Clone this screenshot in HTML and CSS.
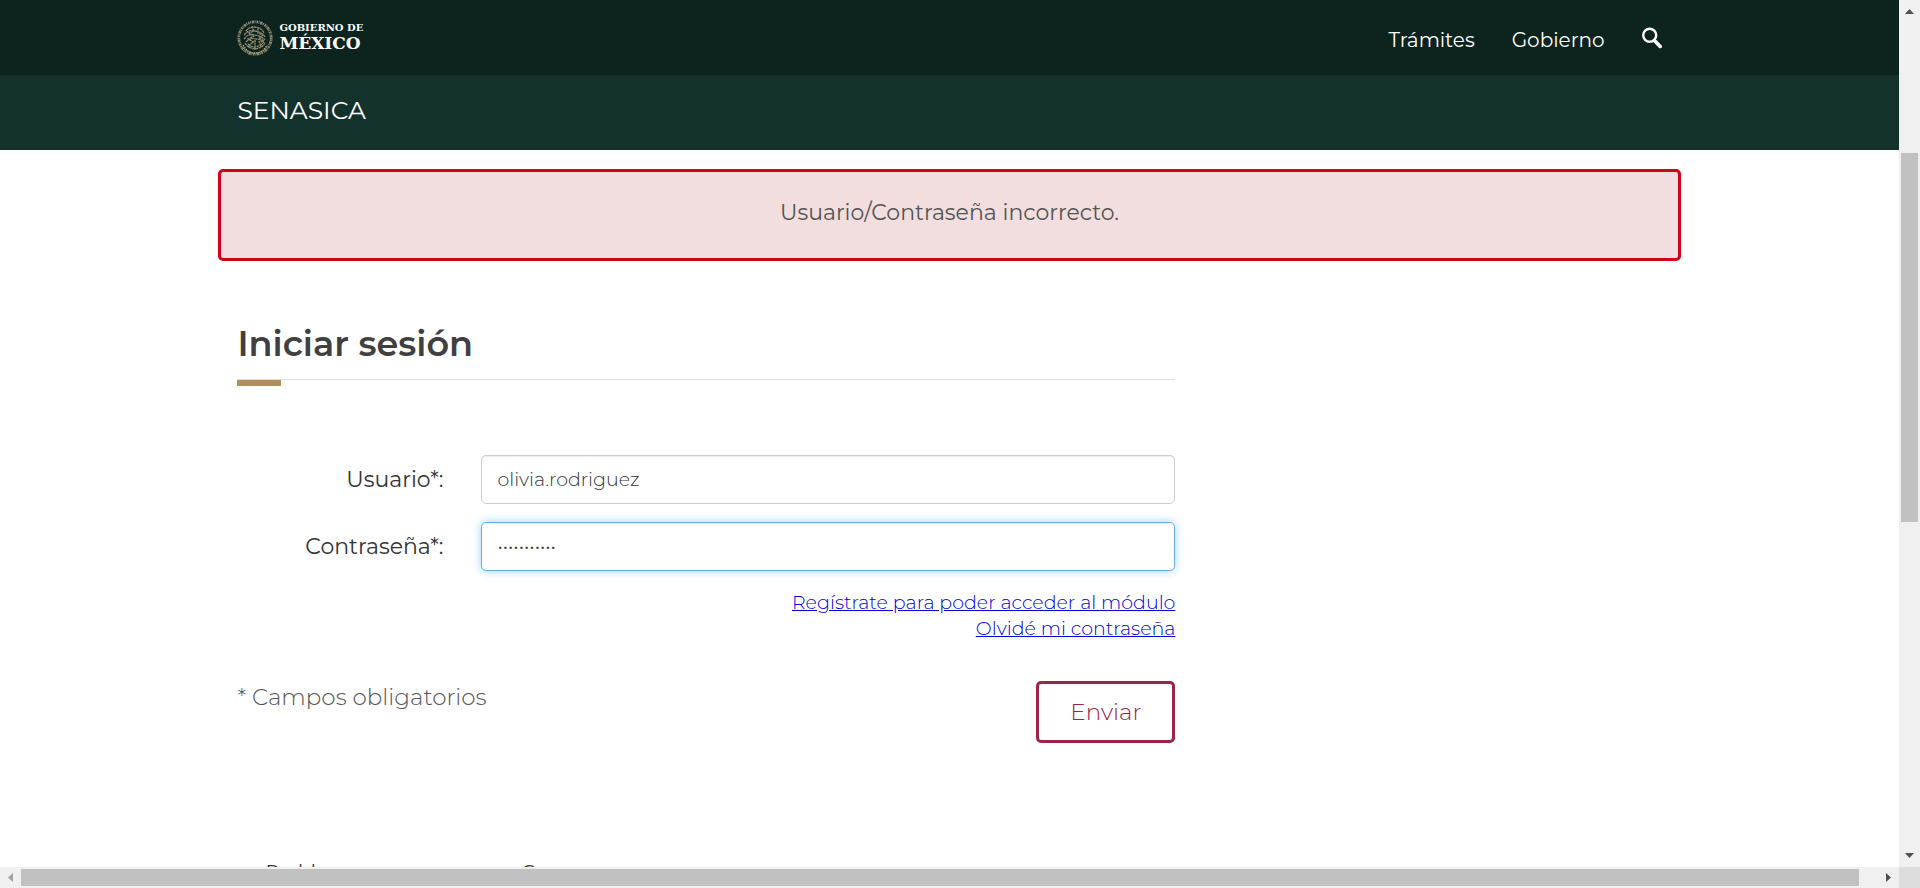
FILE: index.html
```html
<!DOCTYPE html>
<html lang="es">
<head>
<meta charset="utf-8">
<title>SENASICA</title>
<link rel="stylesheet" href="styles.css">
</head>
<body>
<div class="window">
  <div class="page">
    <header class="topbar">
      <div class="container topbar-row">
        <a class="brand" href="#">
          <svg class="emblem" viewBox="0 0 36 36" aria-hidden="true">
            <g fill="none" stroke="#8f886f">
              <circle cx="18" cy="18" r="16.2" stroke-width="2.8" stroke-dasharray="1.6 .6 .8 .7 2.4 .6 1 .9"/>
              <path d="M6 25q4 8 12 8t12-8" stroke="#b0a684" stroke-width="1.4" stroke-dasharray="1.5 .8"/>
              <g stroke-width="1.3" stroke-dasharray="2.6 .5">
                <path d="M9 11q3-4 8-4 7 0 10 6M7 15q5-6 11-4 7 1 10 6M7 19q5-6 10-4 6 0 11 5M9 22q5-5 10-3 5 0 8 4"/>
                <path d="M15 6l2 5-5 2 5 3-6 3 6 3-4 2M21 8l0 5 5 2-4 3 5 3-5 1 3 4"/>
                <path d="M8 23q3 5 10 6 7-1 10-6M11 24q3 3 7 3 5-1 8-4M18 20v10M13 24l-1 4M23 24l1 3"/>
              </g>
            </g>
          </svg>
          <span class="brand-text"><span class="brand-small">GOBIERNO DE</span><span class="brand-big">MÉXICO</span></span>
        </a>
        <nav class="topnav">
          <a href="#">Trámites</a>
          <a href="#">Gobierno</a>
          <a class="search-link" href="#" aria-label="Buscar">
            <svg class="search" viewBox="0 0 20 22" aria-hidden="true">
              <circle cx="7.7" cy="8.3" r="6.5" fill="none" stroke="#fff" stroke-width="2.4"/>
              <path d="M12.4 13.4l5.800 6" stroke="#fff" stroke-width="3.600" stroke-linecap="round"/>
            </svg>
          </a>
        </nav>
      </div>
    </header>
    <div class="subbar"><div class="container"><a href="#">SENASICA</a></div></div>
    <main class="container">
      <div class="alert" role="alert">Usuario/Contraseña incorrecto.</div>
      <form class="login">
        <h1>Iniciar sesión</h1>
        <div class="rule"></div>
        <div class="field">
          <label for="user">Usuario*:</label>
          <input id="user" type="text" value="olivia.rodriguez">
        </div>
        <div class="field">
          <label for="pass">Contraseña*:</label>
          <input id="pass" class="focused" type="password" value="abcdefghijk">
        </div>
        <div class="links">
          <a href="#">Regístrate para poder acceder al módulo</a>
          <a href="#">Olvidé mi contraseña</a>
        </div>
        <div class="actions">
          <p>* Campos obligatorios</p>
          <button type="button">Enviar</button>
        </div>
      </form>
      <div class="more"><span>Problemas</span><span>Correo</span></div>
    </main>
  </div>
  <div class="vbar" aria-hidden="true">
    <svg class="arrow" viewBox="0 0 21 21"><path d="M6 14h9l-4.500-5z" fill="#505050"/></svg>
    <div class="vtrack"><div class="vthumb"></div></div>
    <svg class="arrow" viewBox="0 0 21 21"><path d="M6 7h9l-4.500 5z" fill="#505050"/></svg>
  </div>
  <div class="hbar" aria-hidden="true">
    <svg class="arrow" viewBox="0 0 21 21"><path d="M13 6v9l-5-4.500z" fill="#a3a3a3"/></svg>
    <div class="htrack"><div class="hthumb"></div></div>
    <svg class="arrow" viewBox="0 0 21 21"><path d="M8 6v9l5-4.500z" fill="#505050"/></svg>
  </div>
  <div class="corner"></div>
</div>
</body>
</html>
```
FILE: styles.css
```css
* { box-sizing: border-box; }
body { margin: 0; font-family: Montserrat, Inter, "Open Sans", sans-serif; font-size: 22px; color: #333; background: #fff; }
a { color: inherit; text-decoration: none; }
.window { display: grid; grid-template: minmax(0, 1fr) 21px / minmax(0, 1fr) 21px; height: 100vh; }
.page { overflow: hidden; }
.container { width: 77%; margin: 0 auto; padding: 0 19px; }
.topbar { background: #0c231e; color: #fff; }
.topbar-row { display: flex; align-items: center; justify-content: space-between; height: 75px; }
.brand { display: flex; align-items: center; gap: 6px; }
.emblem { width: 36px; height: 36px; }
.brand-text { display: flex; flex-direction: column; font-family: "DejaVu Serif", serif; font-weight: bold; padding-bottom: 2px; }
.brand-small { font-size: 10px; line-height: 12px; }
.brand-big { font-size: 17px; line-height: 18px; }
.topnav { display: flex; align-items: center; gap: 37px; font-size: 20px; padding-top: 4px; }
.search-link { padding-bottom: 4px; }
.search { display: block; width: 20px; height: 22px; }
.subbar { background: #13322b; color: #fff; font-size: 25px; line-height: 71px; padding-bottom: 4px; }
.alert { margin: 19px -19px 0; border: 3px solid #d0021b; border-radius: 5px; background: #f2dede; color: #545454; text-align: center; line-height: 30px; padding: 26px 18px 30px; }
.login { width: 67%; max-width: 938px; padding-top: 58px; }
h1 { margin: 0; color: #404041; font-size: 35px; line-height: 50px; font-weight: 600; }
.rule { border-top: 1px solid #ddd; margin: 10px 0 69px; }
.rule::before { content: ""; display: block; width: 44px; height: 6px; background: #b38e5d; }
.field { display: grid; grid-template-columns: 206px minmax(0, 1fr); column-gap: 38px; align-items: center; margin-bottom: 18px; }
.field label { text-align: right; }
.field input { height: 49px; padding: 8px 15px; border: 1px solid #ccc; border-radius: 5px; font: inherit; font-size: 19px; font-weight: 300; color: #333; outline: none; box-shadow: inset 0 1px 1px rgba(0, 0, 0, .075); }
.field .focused { border-color: #66afe9; box-shadow: inset 0 1px 1px rgba(0, 0, 0, .075), 0 0 10px rgba(102, 175, 233, .6); }
.links { display: flex; flex-direction: column; align-items: flex-end; font-size: 19px; font-weight: 300; line-height: 26px; color: #0000d8; margin-top: 19px; }
.links a { text-decoration: underline; }
.actions { display: flex; justify-content: space-between; margin-top: 39px; color: #555; font-weight: 300; }
.actions p { margin: 0; font-size: 23px; line-height: 32px; }
button { width: 139px; height: 62px; border: 3px solid #9d2449; border-radius: 5px; background: #fff; color: #9d2449; font: inherit; font-size: 23px; }
.more { display: grid; grid-template-columns: 256px 256px; padding: 118px 28px 0; white-space: nowrap; font-size: 19px; line-height: 22px; }
.vbar { display: flex; flex-direction: column; background: #f0f0f0; }
.hbar { display: flex; background: #f0f0f0; }
.arrow { flex: none; width: 21px; height: 21px; }
.vtrack { flex: 1; padding: 0 2px; }
.vtrack::before { content: ""; display: block; height: 16%; }
.vthumb { height: 44.7%; background: #c1c1c1; }
.htrack { flex: 1; padding: 2px 0; }
.hthumb { width: 99%; height: 17px; background: #c1c1c1; }
.corner { background: #dcdcdc; }
```
